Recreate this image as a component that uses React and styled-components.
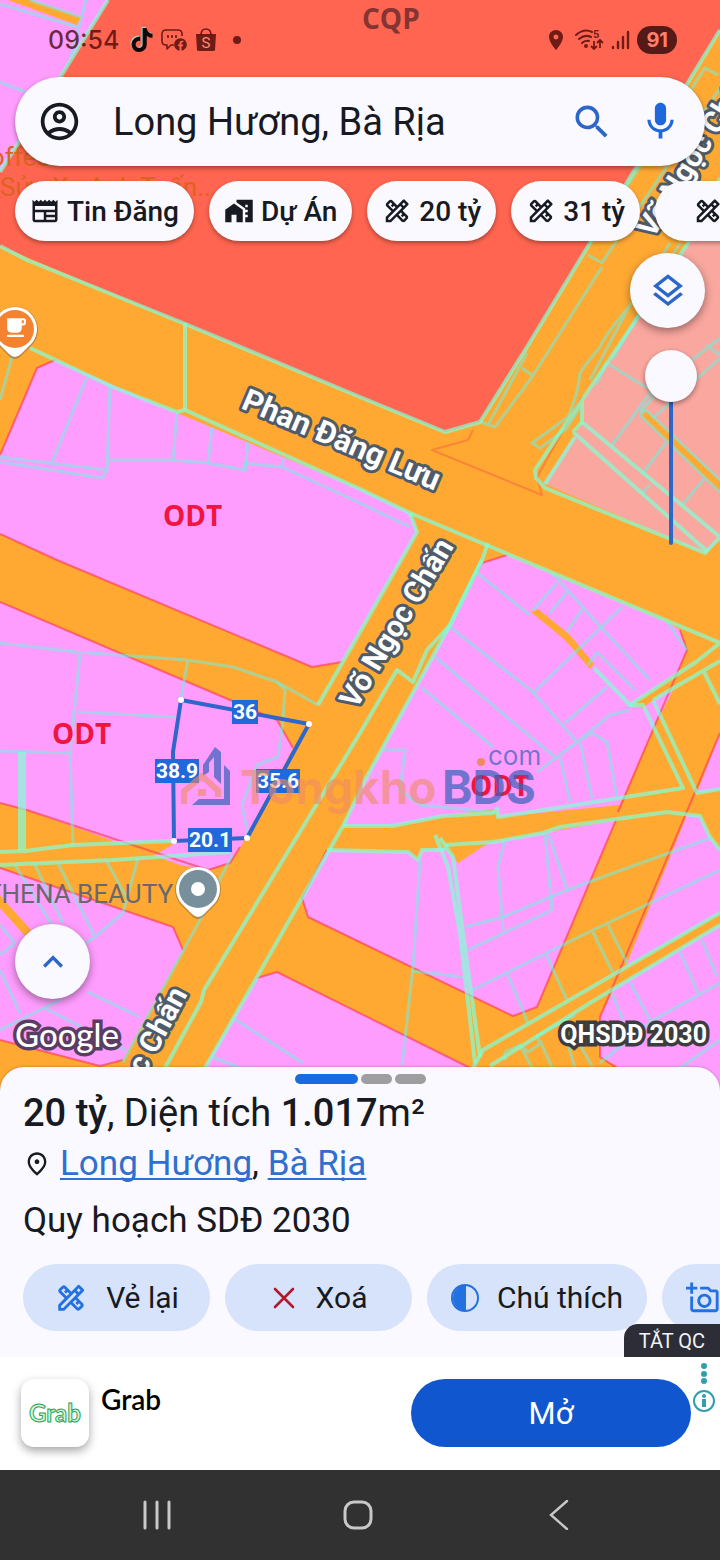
import React, { useState } from 'react';
import styled, { createGlobalStyle } from 'styled-components';
import {
  MdOutlineAccountCircle,
  MdSearch,
  MdMic,
  MdNewspaper,
  MdHomeWork,
  MdOutlineDesignServices,
  MdOutlineLayers,
  MdKeyboardArrowUp,
  MdOutlinePlace,
  MdPlace,
  MdOutlineAddAPhoto,
  MdLocalCafe,
} from 'react-icons/md';
import { FaTiktok, FaFacebook } from 'react-icons/fa';

const GlobalStyle = createGlobalStyle`
  * {
    box-sizing: border-box;
  }

  body {
    margin: 0;
    background: #313131;
    font-family: Roboto, "Noto Sans", sans-serif;
    color: #171a22;
  }

  button {
    font-family: inherit;
    color: inherit;
    border: 0;
    padding: 0;
    background: none;
    cursor: pointer;
  }

  svg {
    display: block;
    flex-shrink: 0;
  }
`;

const Screen = styled.div`
  display: flex;
  flex-direction: column;
  min-height: 100vh;
  overflow: hidden;
`;

/* ---------- Map ---------- */

const MapArea = styled.section`
  position: relative;
  flex: 1;
  display: flex;
  flex-direction: column;
  overflow: hidden;
  background: #ffa933;
  padding-bottom: 38px; /* the sheet slides over the last 24px */
`;

const MapCanvas = styled.svg`
  position: absolute;
  top: 0;
  left: 0;
  width: 100%;
  height: 100%;
`;

const Overlay = styled.div`
  position: relative;
  flex: 1;
  display: flex;
  flex-direction: column;
`;

const StatusBar = styled.div`
  display: flex;
  align-items: center;
  justify-content: space-between;
  height: 77px;
  padding: 3px 43px 0 48px;
  color: rgba(70, 8, 8, 0.78);
`;

const StatusGroup = styled.div`
  display: flex;
  align-items: center;
  gap: 7px;
`;

const Clock = styled.span`
  font-family: Inter, Roboto, sans-serif;
  font-size: 25px;
  font-weight: 500;
  line-height: 30px;
  margin-right: 4px;
`;

const TiktokIcon = styled(FaTiktok)`
  color: #120808;
  filter: drop-shadow(-1px -1px 0 #8fd9cf);
`;

const Dot = styled.span`
  width: 8px;
  height: 8px;
  margin-left: 9px;
  border-radius: 50%;
  background: currentColor;
`;

const Battery = styled.span`
  padding: 0 9px;
  border-radius: 14px;
  background: #551a17;
  color: #ff7f6d;
  font-family: Inter, Roboto, sans-serif;
  font-size: 20px;
  font-weight: 700;
  line-height: 28px;
`;

const SearchBar = styled.form`
  display: flex;
  align-items: center;
  height: 89px;
  margin: 0 15px;
  padding: 0 22px;
  border-radius: 45px;
  background: #faf9ff;
  box-shadow: 0 2px 5px rgba(0, 0, 0, 0.4);
`;

const SearchInput = styled.input`
  flex: 1;
  min-width: 0;
  height: 60px;
  padding: 0;
  margin: 0 20px 0 31px;
  border: 0;
  outline: 0;
  background: none;
  color: #171a22;
  font-family: Roboto, "Noto Sans", sans-serif;
  font-size: 38px;
`;

const IconButton = styled.button`
  color: ${(props) => props.$color};
  margin-left: ${(props) => props.$space || 0}px;
`;

const Chips = styled.div`
  display: flex;
  gap: 15px;
  padding: 15px 0 12px 15px;
`;

const Chip = styled.button`
  display: flex;
  flex-shrink: 0;
  align-items: center;
  gap: 7px;
  height: 60px;
  padding: 0 ${(props) => (props.$wide ? 38 : 15)}px;
  border-radius: 30px;
  background: #faf9ff;
  box-shadow: 0 2px 4px rgba(0, 0, 0, 0.35);
  font-size: 28px;
  font-weight: 500;
  white-space: nowrap;
`;

const RightControls = styled.div`
  display: flex;
  flex-direction: column;
  align-items: flex-end;
  gap: 22px;
  padding: 0 15px;
`;

const RoundButton = styled.button`
  display: flex;
  align-items: center;
  justify-content: center;
  width: 75px;
  height: 75px;
  border-radius: 50%;
  background: #faf9ff;
  color: #2c66c9;
  box-shadow: 0 3px 8px rgba(0, 0, 0, 0.4);
`;

const OpacitySlider = styled.input`
  appearance: none;
  writing-mode: vertical-lr;
  direction: rtl;
  width: 52px;
  height: 195px;
  margin: 0 8px 0 0;
  background: none;

  &::-webkit-slider-runnable-track {
    width: 4px;
    height: 195px;
    border-radius: 2px;
    background: #2c66c9;
  }

  &::-webkit-slider-thumb {
    appearance: none;
    width: 52px;
    height: 52px;
    margin-left: -24px;
    border-radius: 50%;
    background: #faf9ff;
    box-shadow: 0 2px 5px rgba(0, 0, 0, 0.4);
  }
`;

const MapFooter = styled.div`
  display: flex;
  flex-direction: column;
  gap: 16px;
  margin-top: auto;
  padding: 0 13px 0 15px;
`;

const Credits = styled.div`
  display: flex;
  align-items: center;
  justify-content: space-between;
  height: 38px;
`;

const GoogleMark = styled.span`
  font-family: Lato, sans-serif;
  font-size: 33px;
  font-weight: 500;
  color: #fff;
  -webkit-text-stroke: 7px #5b3d63;
  paint-order: stroke fill;
  line-height: 38px;
`;

const PlanName = styled.span`
  font-size: 25px;
  font-weight: 700;
  color: #fff;
  -webkit-text-stroke: 7px #3d3d40;
  paint-order: stroke fill;
`;

/* ---------- Bottom sheet ---------- */

const Sheet = styled.section`
  position: relative;
  margin-top: -24px;
  padding: 7px 0 26px;
  border-radius: 24px 24px 0 0;
  background: #faf9ff;
  box-shadow: 0 0 3px rgba(0, 0, 0, 0.3);
`;

const Pager = styled.div`
  display: flex;
  justify-content: center;
  gap: 3px;
`;

const PagerDot = styled.span`
  width: ${(props) => (props.$active ? 63 : 31)}px;
  height: 10px;
  border-radius: 5px;
  background: ${(props) => (props.$active ? '#1a6be0' : '#9e9ea1')};
`;

const Title = styled.h1`
  margin: 5px 23px 0;
  font-size: 38px;
  font-weight: 400;
  line-height: 48px;

  b {
    font-weight: 500;
  }
`;

const Place = styled.p`
  display: flex;
  align-items: center;
  gap: 9px;
  margin: 3px 23px 0;
  font-size: 35px;
  line-height: 48px;

  a {
    color: #2f6fd0;
    text-underline-offset: 3px;
    text-decoration-thickness: 2px;
    text-decoration-skip-ink: none;
  }
`;

const Plan = styled.p`
  margin: 9px 23px 0;
  font-size: 35px;
  line-height: 48px;
`;

const Actions = styled.div`
  display: flex;
  gap: 15px;
  margin-top: 19px;
  padding-left: 23px;
`;

const Action = styled.button`
  display: flex;
  flex-shrink: 0;
  align-items: center;
  justify-content: center;
  gap: 18px;
  min-width: 187px;
  height: 67px;
  padding: 0 24px;
  border-radius: 34px;
  background: #d7e3fa;
  font-size: 30px;
  white-space: nowrap;

  svg {
    color: ${(props) => props.$icon || '#2370e0'};
  }
`;

const IconAction = styled(Action)`
  justify-content: flex-start;
`;

const CloseAd = styled.button`
  position: absolute;
  right: 0;
  bottom: 0;
  height: 33px;
  padding: 0 15px;
  border-radius: 14px 0 0 0;
  background: #2c2d37;
  color: #f4f4f8;
  font-size: 20px;
`;

/* ---------- Ad banner ---------- */

const Banner = styled.aside`
  position: relative;
  display: flex;
  align-items: flex-start;
  padding: 22px 29px 23px 21px;
  background: #fff;
`;

const AdIcon = styled.div`
  display: flex;
  align-items: center;
  justify-content: center;
  width: 68px;
  height: 68px;
  border-radius: 13px;
  background: #fff;
  box-shadow: 0 4px 10px rgba(0, 0, 0, 0.35);
`;

const AdName = styled.span`
  flex: 1;
  padding: 3px 12px;
  color: #000;
  font-family: Lato, sans-serif;
  font-size: 28px;
  font-weight: 600;
  line-height: 34px;
`;

const OpenButton = styled.button`
  flex: 0 1 280px;
  height: 68px;
  border-radius: 34px;
  background: #0f56cf;
  color: #fff;
  font-size: 31px;
`;

const AdChoices = styled.button`
  position: absolute;
  top: 6px;
  right: 4px;
`;

/* ---------- Android navigation ---------- */

const NavBar = styled.nav`
  display: grid;
  grid-template-columns: repeat(3, 1fr);
  height: 90px;
  padding: 0 60px 0 56px;
  background: #313131;
`;

const NavButton = styled.button`
  display: flex;
  align-items: center;
  justify-content: center;
`;

const GREEN = '#80ffd5';
const AQUA = '#70f0e0';

// land parcels, filled by zone
const pinkZones = [
  'M0 0H108L0 172Z',
  'M0 455L37 368L55 360L113 385L177 413L360 489L410 513L417 532L342 662L312 667L57 560L0 534Z',
  'M0 602L230 700L277 720L293 748L240 848L230 863L208 870L180 865L27 810L0 803Z',
  'M0 868L173 927L183 950L123 1060L100 1066L0 1040Z',
  'M482 563L507 555L667 622L680 630L687 650L620 805L498 817L496 809L443 816L392 826H343L365 780L450 625Z',
  'M720 733V790L697 793Z',
  'M655 700L673 690L658 720Z',
  'M327 850L408 852L418 860L422 850L493 842L543 833L616 820L537 1007L513 1016L308 917L302 898Z',
  'M687 815L700 816L710 837L720 850V1092H640L617 1066L600 1057V1017L627 963Z',
  'M257 978L277 972L467 1066V1092H190Z',
];

const orangeStrips = [
  'M8 0H30L81 17L77 25Z',
  'M0 852L22 850L73 846L180 840L150 858L0 865Z',
  'M630 705L720 643V661L653 700L643 708Z',
  'M531 612L538 609L570 635L594 664L590 669L565 640Z',
  'M443 845L490 842L458 863Z',
  'M720 913V925L590 1003L480 1070V1050Z',
  'M640 415L646 410L720 481V492Z',
  'M0 895L4 900L31 930L25 936L0 908Z',
];

const thickLines = [
  'M0 246L27 260L183 323L360 397L445 432L480 422L527 347L590 243L720 30',
  'M108 0L61 76L0 172',
  'M30 348L113 387L177 412L185 410L360 489L410 513L720 643L696 662L630 705L594 668',
  'M410 513L417 532L360 632L318 705',
  'M488 543L482 560L450 625L427 650L413 682L397 670L360 733L312 812L204 990L201 1002L165 1068',
  'M482 560L450 625L365 780L343 826L302 898L257 977L205 1068',
  'M343 826H392L443 816L493 813L497 809L498 817L607 800L683 788L643 705L630 705',
  'M327 850L408 852L418 860L422 850H445',
  'M445 845L493 842L543 833L560 827L667 812L700 816L710 837L720 850',
  'M653 700L697 793L720 789M653 700L720 661M704 672L720 704',
  'M720 913L483 1050L473 1068M720 925L590 1003L490 1066',
  'M435 835L448 867L460 933L475 1063M440 838L453 857L463 933L480 1057',
  'M185 323V410M0 852L25 851L73 845L173 841M0 865L113 860L230 852',
  'M582 400V422L720 537L705 553L545 488L536 478L535 470L582 400L607 363L690 240L720 178',
  'M573 432L708 552M573 432L582 422M545 484L575 437',
  'M20 752V850M24 752V850',
];

const thinLines = [
  'M0 4L77 27M30 0L81 17M86 0L71 57M0 82L25 92M12 357L0 400',
  'M87 377L52 462M110 385L107 470L102 478L0 462M0 457L107 470M110 460H173L208 463L245 470V463L282 467L360 503L410 527',
  'M177 412L173 460M212 427L208 463M248 442L245 470M283 458L282 467',
  'M0 643L77 652L187 660L233 667L277 682L318 705M80 653L70 753L73 845M77 712L175 717M0 751L70 753M188 660L181 697',
  'M277 682L285 690L283 720L278 757L257 765L242 805L248 835',
  'M232 855L200 920L123 1062',
  'M15 865L55 930M35 865L63 923M58 863L95 937M107 862L128 900M138 858L123 913L95 937L60 960',
  'M88 992L140 1017M43 1007L125 1050M0 970L20 1013M0 925L15 943L0 955M0 1030L60 1000',
  'M602 267L532 377L495 427L480 422M588 255L602 263L615 243L720 88M522 368L532 375M527 353L488 425M590 243L705 68L718 75M660 120L672 128',
  'M628 308Q605 335 600 347Q585 365 580 373Q578 395 568 417L532 443L540 448L567 428L580 407M670 243L630 305L590 380M607 363L596 385M680 243L612 360',
  'M607 363L647 388M650 393L612 445M668 440L643 473M705 478L682 505M650 485L642 493M640 415L646 410L720 480M640 415L720 492',
  'M720 338L650 393M720 358L653 418M706 345L720 355M640 412L655 395',
  'M477 573L530 615M450 627L533 692L577 742M435 657L555 757M422 688L493 747M552 573L597 623L650 680M557 583L533 610M567 592L550 613M583 608L567 632',
  'M622 607L533 693M588 665L597 652L635 690M607 687L565 723M630 710L610 715L577 742L537 772M560 757L570 802M580 742L592 798M577 742L592 733L607 742L617 798M667 622L687 650',
  'M383 750H405L400 790L420 805L495 812M420 860L413 967L402 1066M505 840L498 867L503 930M545 833L552 910L468 950M549 835L567 890',
  'M465 927L503 917L567 890L710 838M472 990L593 930L720 870M412 971L463 977M507 973L528 1023M545 952L567 1000M593 932L613 973M608 925L627 963',
  'M680 952L698 993M702 940L717 977M720 983L653 1020L600 1063M630 982L650 1020M612 993L623 1020M720 1040L680 1068',
  'M505 1060V1052L520 1045L528 1052L540 1044L537 1036L575 1015M520 1045L532 1068M540 1040L552 1068M562 1025L575 1068M580 1045L592 1066',
  'M233 1018L303 1063M213 1057L240 1068',
];

const redLines = [
  'M0 455L37 368L55 360M342 662L312 667L57 560L0 534',
  'M0 602L230 700L277 720L293 748M240 847L230 863L208 870L27 810L0 803',
  'M0 868L173 927L183 950M123 1060L100 1066L0 1040',
  'M450 625L482 563L507 555M680 630L687 650L618 812M720 733L600 1017V1057L620 1070',
  'M327 850L302 898L308 917L513 1016L537 1007L616 820M257 978L277 972L470 1068',
];

const StreetMap = () => (
  <MapCanvas viewBox="0 0 720 1092" preserveAspectRatio="xMidYMin slice" aria-hidden="true">
    <rect width="720" height="1092" fill="#ffa933" />
    <path d="M108 0H720V30L590 243L527 347L480 422L445 432L360 397L183 323L0 246V172Z" fill="#ff6550" />
    <path d="M720 178L690 240L607 363L583 400V422L543 483L705 553L720 540Z" fill="#f9a79f" />
    {pinkZones.map((d) => <path key={d} d={d} fill="#ff9dff" />)}
    {orangeStrips.map((d) => <path key={d} d={d} fill="#ffa933" />)}
    <g fill="none" strokeLinejoin="round">
      {redLines.map((d) => <path key={d} d={d} stroke="#ff3c50" strokeOpacity=".65" strokeWidth="2" />)}
      <path d="M473 430L468 440L432 450L542 495L537 477L582 397" stroke="#f0503c" strokeOpacity=".4" strokeWidth="2" />
      {thinLines.map((d) => <path key={d} d={d} stroke={AQUA} strokeOpacity=".55" strokeWidth="3" />)}
      {thickLines.map((d) => <path key={d} d={d} stroke={GREEN} strokeOpacity=".7" strokeWidth="4" />)}
    </g>

    <ZoneLabel x="362" y="29" fill="#853434">CQP</ZoneLabel>
    <ZoneLabel x="163" y="526">ODT</ZoneLabel>
    <ZoneLabel x="52" y="744">ODT</ZoneLabel>
    <ZoneLabel x="470" y="796">ODT</ZoneLabel>

    <PoiLabel x="50" y="166" textAnchor="end" fill="#d9641f">Coffee</PoiLabel>
    <PoiLabel x="0" y="196" fill="#d9641f">Sửa Xe Anh Tuấn...</PoiLabel>
    <PoiLabel x="173" y="903" textAnchor="end" fill="#6a6770">ATHENA BEAUTY</PoiLabel>

    <RoadLabel transform="translate(240 408) rotate(23)" $size={31}>Phan Đăng Lưu</RoadLabel>
    <RoadLabel transform="translate(356 710) rotate(-59)">Võ Ngọc Chấn</RoadLabel>
    <RoadLabel transform="translate(653 239) rotate(-58)">Võ Ngọc Chấn</RoadLabel>
    <RoadLabel transform="translate(188 994) rotate(-62)" textAnchor="end">Võ Ngọc Chấn</RoadLabel>

    <Pin x={15} y={329} fill="#f58231">
      <MdLocalCafe x="-12" y="-14" size="25" color="#fff" />
    </Pin>
    <Pin x={198} y={889} fill="#78909c">
      <circle r="7" fill="#fff" />
    </Pin>

    <path d="M181 700L309 724L247 838L174 841L173 752Z" fill="none" stroke="#2f66cc" strokeWidth="4" />
    {[[181, 700], [309, 724], [247, 838], [174, 841]].map(([x, y]) => (
      <circle key={x} cx={x} cy={y} r="3" fill="#fff" />
    ))}
    <Measure x={245} y={712} w={26}>36</Measure>
    <Measure x={177} y={771} w={44}>38.9</Measure>
    <Measure x={278} y={781} w={44}>35.6</Measure>
    <Measure x={210} y={840} w={44}>20.1</Measure>

    <g fill="#3c63bd" fillOpacity=".72">
      <path d="M203 765L215 747L221 752V784L214 777V757L209 763V772L203 776Z" />
      <path d="M224 765L230 771V805H192L199 799H224Z" />
      <WatermarkText x="442" y="804">BDS</WatermarkText>
      <WatermarkText x="488" y="765" $small>com</WatermarkText>
    </g>
    <g fill="#ef8b62" fillOpacity=".6">
      <path d="M181 804V790L202 772L221 789V797H215V792L202 780L187 793V804Z" />
      <rect x="198" y="789" width="8" height="7" />
      <WatermarkText x="240" y="804">Tongkho</WatermarkText>
      <circle cx="481" cy="762" r="4" fillOpacity="1" />
    </g>
  </MapCanvas>
);

const ZoneLabel = styled.text.attrs((props) => ({ fill: props.fill || '#f01440' }))`
  font-family: "Open Sans", "Noto Sans", sans-serif;
  font-size: 28px;
  font-weight: 700;
`;

const PoiLabel = styled.text`
  font-size: 26px;
`;

const RoadLabel = styled.text`
  font-size: ${(props) => props.$size || 30}px;
  font-weight: 700;
  fill: #fff;
  stroke: #505b69;
  stroke-width: 6px;
  stroke-linejoin: round;
  paint-order: stroke;
`;

const MeasureText = styled.text`
  font-size: 21px;
  font-weight: 700;
  fill: #fff;
  text-anchor: middle;
`;

const WatermarkText = styled.text`
  font-family: Inter, sans-serif;
  font-size: ${(props) => (props.$small ? 26 : 46)}px;
  font-weight: ${(props) => (props.$small ? 400 : 700)};
`;

const Measure = ({ x, y, w, children }) => (
  <g>
    <rect x={x - w / 2} y={y - 12} width={w} height="24" fill="#2068dc" />
    <MeasureText x={x} y={y + 7}>{children}</MeasureText>
  </g>
);

const Pin = ({ x, y, fill, children }) => (
  <g transform={`translate(${x} ${y})`}>
    <path d="M0 30Q-4 30 -8 25L-18 15A23 23 0 1 1 18 15L8 25Q4 30 0 30Z" fill="#444" fillOpacity=".35" />
    <path d="M0 28Q-3 28 -6 25L-17 14A22 22 0 1 1 17 14L6 25Q3 28 0 28Z" fill="#fff" />
    <circle r="19" fill={fill} />
    {children}
  </g>
);

const ChatIcon = () => (
  <svg width="27" height="24" viewBox="0 0 27 24" fill="none" stroke="currentColor" strokeWidth="1.6">
    <path d="M13 17H10L6 21V17H5Q1 17 1 13V6Q1 2 5 2H17Q21 2 21 6V8" strokeLinejoin="round" />
    <path d="M6 8.5H8M10 8.5H12M14 8.5H16" strokeWidth="2.4" />
    <FaFacebook x="13" y="10" size="13" stroke="none" />
  </svg>
);

const BagText = styled.text`
  font-size: 15px;
  fill: #ff8a78;
  text-anchor: middle;
`;

const BagIcon = () => (
  <svg width="22" height="24" viewBox="0 0 22 24">
    <path d="M6 7Q6 1 11 1T16 7" fill="none" stroke="currentColor" strokeWidth="1.6" />
    <path d="M1 6H21L20 22Q20 23 18 23H4Q2 23 2 22Z" fill="currentColor" />
    <BagText x="11" y="20">S</BagText>
  </svg>
);

const WifiText = styled.text`
  font-size: 11px;
  font-weight: 700;
  stroke: none;
  fill: currentColor;
`;

const WifiIcon = () => (
  <svg width="29" height="24" viewBox="0 0 29 24" fill="none" stroke="currentColor" strokeWidth="2">
    <path d="M1 7Q9 0 17 4M4 11Q10 6 16 9M7 15Q10 12 14 13" strokeLinecap="round" />
    <circle cx="11" cy="18" r="1" />
    <path d="M19 13V21M16 18L19 21L22 18M25 20V12M22 15L25 12L28 15" strokeWidth="1.8" />
    <WifiText x="18" y="10">5</WifiText>
  </svg>
);

const SignalIcon = () => (
  <svg width="19" height="20" viewBox="0 0 19 20" fill="none" stroke="currentColor" strokeWidth="2.4" strokeLinecap="round">
    <path d="M2 17V18M7 12V18M12 7V18M17 2V18" />
  </svg>
);

const CrossIcon = () => (
  <svg width="28" height="28" viewBox="0 0 28 28" stroke="#b3182c" strokeWidth="2.6" strokeLinecap="round">
    <path d="M5 5L23 23M23 5L5 23" />
  </svg>
);

const HalfCircleIcon = () => (
  <svg width="28" height="28" viewBox="0 0 28 28">
    <circle cx="14" cy="14" r="13" fill="none" stroke="currentColor" strokeWidth="2" />
    <path d="M15 1A13 13 0 0 0 15 27Z" fill="currentColor" />
  </svg>
);

const GrabText = styled.text`
  font-family: Lato, sans-serif;
  font-size: 24px;
  font-weight: 700;
  fill: #d9f5e3;
  stroke: #1fa352;
  stroke-width: 1px;
  text-anchor: middle;
`;

const GrabLogo = () => (
  <svg width="60" height="30" viewBox="0 0 60 30" role="img" aria-label="Grab">
    <GrabText x="30" y="24">Grab</GrabText>
  </svg>
);

const InfoIcon = () => (
  <svg width="24" height="50" viewBox="0 0 24 50" fill="#2f9fb0">
    <circle cx="12" cy="3" r="3" />
    <circle cx="12" cy="11" r="3" />
    <circle cx="12" cy="18" r="3" />
    <circle cx="12" cy="38" r="10" fill="#fff" stroke="#2f9fb0" strokeWidth="2" />
    <circle cx="12" cy="33" r="2" />
    <path d="M10 36H14V44H10Z" />
  </svg>
);

const prices = ['20 tỷ', '31 tỷ'];

const App = () => {
  const [query, setQuery] = useState('Long Hương, Bà Rịa');
  const [opacity, setOpacity] = useState(100);

  return (
    <>
      <GlobalStyle />
      <Screen>
        <MapArea>
          <StreetMap />
          <Overlay>
            <StatusBar>
              <StatusGroup>
                <Clock>09:54</Clock>
                <TiktokIcon size="24" />
                <ChatIcon />
                <BagIcon />
                <Dot />
              </StatusGroup>
              <StatusGroup>
                <MdPlace size="24" />
                <WifiIcon />
                <SignalIcon />
                <Battery>91</Battery>
              </StatusGroup>
            </StatusBar>

            <SearchBar onSubmit={(e) => e.preventDefault()}>
              <IconButton type="button" $color="#171a22" aria-label="Tài khoản">
                <MdOutlineAccountCircle size="45" />
              </IconButton>
              <SearchInput
                aria-label="Tìm kiếm"
                value={query}
                onChange={(e) => setQuery(e.target.value)}
              />
              <IconButton type="submit" $color="#2c66c9" aria-label="Tìm">
                <MdSearch size="44" />
              </IconButton>
              <IconButton type="button" $color="#1f68dc" $space={24} aria-label="Giọng nói">
                <MdMic size="45" />
              </IconButton>
            </SearchBar>

            <Chips>
              <Chip><MdNewspaper size="30" />Tin Đăng</Chip>
              <Chip><MdHomeWork size="30" />Dự Án</Chip>
              {prices.map((price) => (
                <Chip key={price}><MdOutlineDesignServices size="30" />{price}</Chip>
              ))}
              <Chip $wide aria-label="Đo vẽ"><MdOutlineDesignServices size="30" /></Chip>
            </Chips>

            <RightControls>
              <RoundButton aria-label="Lớp bản đồ"><MdOutlineLayers size="40" /></RoundButton>
              <OpacitySlider
                type="range"
                aria-label="Độ mờ"
                value={opacity}
                onChange={(e) => setOpacity(Number(e.target.value))}
              />
            </RightControls>

            <MapFooter>
              <RoundButton aria-label="Mở rộng"><MdKeyboardArrowUp size="40" /></RoundButton>
              <Credits>
                <GoogleMark>Google</GoogleMark>
                <PlanName>QHSDĐ 2030</PlanName>
              </Credits>
            </MapFooter>
          </Overlay>
        </MapArea>

        <Sheet>
          <Pager>
            <PagerDot $active />
            <PagerDot />
            <PagerDot />
          </Pager>
          <Title><b>20 tỷ</b>, Diện tích <b>1.017</b>m²</Title>
          <Place>
            <MdOutlinePlace size="28" />
            <span><a href="#long-huong">Long Hương</a>, <a href="#ba-ria">Bà Rịa</a></span>
          </Place>
          <Plan>Quy hoạch SDĐ 2030</Plan>
          <Actions>
            <Action><MdOutlineDesignServices size="34" />Vẻ lại</Action>
            <Action $icon="#b3182c"><CrossIcon />Xoá</Action>
            <Action><HalfCircleIcon />Chú thích</Action>
            <IconAction aria-label="Chụp ảnh"><MdOutlineAddAPhoto size="34" /></IconAction>
          </Actions>
          <CloseAd>TẮT QC</CloseAd>
        </Sheet>

        <Banner>
          <AdIcon><GrabLogo /></AdIcon>
          <AdName>Grab</AdName>
          <OpenButton>Mở</OpenButton>
          <AdChoices aria-label="Thông tin quảng cáo"><InfoIcon /></AdChoices>
        </Banner>

        <NavBar>
          <NavButton aria-label="Gần đây">
            <svg width="30" height="30" viewBox="0 0 30 30" stroke="#c8c8c8" strokeWidth="3" strokeLinecap="round">
              <path d="M3 2V28M15 2V28M27 2V28" />
            </svg>
          </NavButton>
          <NavButton aria-label="Trang chủ">
            <svg width="30" height="30" viewBox="0 0 30 30" fill="none" stroke="#c8c8c8" strokeWidth="3">
              <rect x="2" y="2" width="26" height="26" rx="9" />
            </svg>
          </NavButton>
          <NavButton aria-label="Quay lại">
            <svg width="20" height="30" viewBox="0 0 20 30" fill="none" stroke="#c8c8c8" strokeWidth="2.4" strokeLinecap="round">
              <path d="M18 1L2 15L18 29" />
            </svg>
          </NavButton>
        </NavBar>
      </Screen>
    </>
  );
};

export default App;
